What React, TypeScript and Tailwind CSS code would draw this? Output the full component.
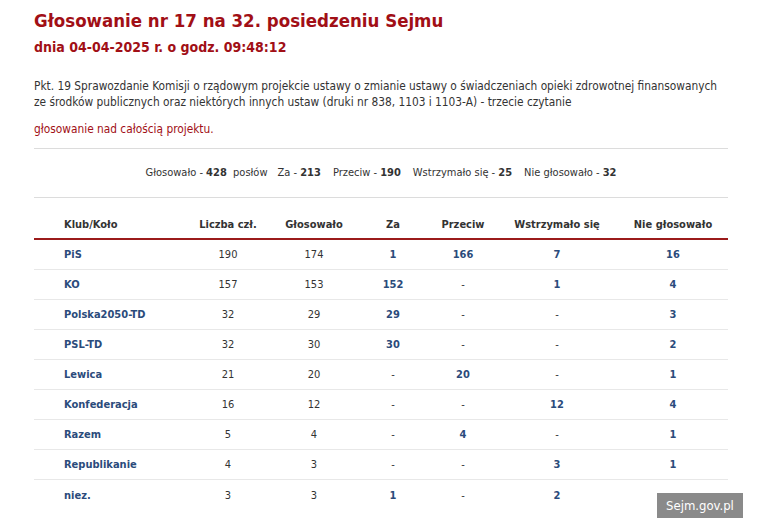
import React from 'react';

type Row = {
  club: string;
  members: number;
  voted: number;
  yes: number | null;
  no: number | null;
  abstain: number | null;
  absent: number | null;
};

const rows: Row[] = [
  { club: 'PiS', members: 190, voted: 174, yes: 1, no: 166, abstain: 7, absent: 16 },
  { club: 'KO', members: 157, voted: 153, yes: 152, no: null, abstain: 1, absent: 4 },
  { club: 'Polska2050-TD', members: 32, voted: 29, yes: 29, no: null, abstain: null, absent: 3 },
  { club: 'PSL-TD', members: 32, voted: 30, yes: 30, no: null, abstain: null, absent: 2 },
  { club: 'Lewica', members: 21, voted: 20, yes: null, no: 20, abstain: null, absent: 1 },
  { club: 'Konfederacja', members: 16, voted: 12, yes: null, no: null, abstain: 12, absent: 4 },
  { club: 'Razem', members: 5, voted: 4, yes: null, no: 4, abstain: null, absent: 1 },
  { club: 'Republikanie', members: 4, voted: 3, yes: null, no: null, abstain: 3, absent: 1 },
  { club: 'niez.', members: 3, voted: 3, yes: 1, no: null, abstain: 2, absent: null },
];

const grid = 'grid grid-cols-[150px_88px_84px_74px_66px_122px_110px] items-center';

const Count = ({ v }: { v: number | null }) =>
  v === null ? (
    <span className="text-[#333]">-</span>
  ) : (
    <span className="font-bold text-[#2b4b7b]">{v}</span>
  );

const App: React.FC = () => {
  return (
    <div
      className="min-h-[531px] bg-white px-[34px] pt-[7px] text-[12px] text-[#333]"
      style={{ fontFamily: '"DejaVu Sans Condensed", "DejaVu Sans", sans-serif' }}
    >
      <div className="w-[694px]">
        <h1 className="text-[18.5px] font-bold leading-[28px] text-[#a10f16]">
          Głosowanie nr 17 na 32. posiedzeniu Sejmu
        </h1>
        <h2 className="mt-[1px] text-[14px] font-bold leading-[22px] text-[#a10f16]">
          dnia 04-04-2025 r. o godz. 09:48:12
        </h2>

        <p className="mt-[20px] max-w-[690px] text-[11.8px] leading-[16px]">
          Pkt. 19 Sprawozdanie Komisji o rządowym projekcie ustawy o zmianie ustawy o świadczeniach opieki zdrowotnej finansowanych ze środków publicznych oraz niektórych innych ustaw (druki nr 838, 1103 i 1103-A) - trzecie czytanie
        </p>
        <p className="mt-[11px] text-[11.8px] leading-[16px] text-[#a10f16]">głosowanie nad całością projektu.</p>

        <div className="mt-[11px] border-t border-b border-[#dcdcdc] py-[16px] text-center text-[11px] leading-[16px]">
          <span>Głosowało - <b>428</b>&nbsp; posłów</span>
          <span className="ml-[10px]">Za - <b>213</b></span>
          <span className="ml-[12px]">Przeciw - <b>190</b></span>
          <span className="ml-[12px]">Wstrzymało się - <b>25</b></span>
          <span className="ml-[12px]">Nie głosowało - <b>32</b></span>
        </div>

        <div className={`${grid} mt-[17px] border-b-2 border-[#9b1b1b] pb-[3px] text-center text-[11px] font-bold leading-[20px]`}>
          <div className="pl-[30px] text-left">Klub/Koło</div>
          <div>Liczba czł.</div>
          <div>Głosowało</div>
          <div>Za</div>
          <div>Przeciw</div>
          <div>Wstrzymało się</div>
          <div>Nie głosowało</div>
        </div>

        {rows.map((r, i) => (
          <div
            key={r.club}
            className={`${grid} h-[30px] pt-[2px] text-center text-[11px] ${i < rows.length - 1 ? 'border-b border-[#e8e8e8]' : ''}`}
          >
            <div className="pl-[30px] text-left font-bold text-[#2b4b7b]">{r.club}</div>
            <div>{r.members}</div>
            <div>{r.voted}</div>
            <div><Count v={r.yes} /></div>
            <div><Count v={r.no} /></div>
            <div><Count v={r.abstain} /></div>
            <div><Count v={r.absent} /></div>
          </div>
        ))}
      </div>

      <div className="fixed left-[657px] top-[493px] bg-[#8a8a8a] px-[9px] py-[3px] text-[13px] leading-[19px] text-white">
        Sejm.gov.pl
      </div>
    </div>
  );
};

export default App;
